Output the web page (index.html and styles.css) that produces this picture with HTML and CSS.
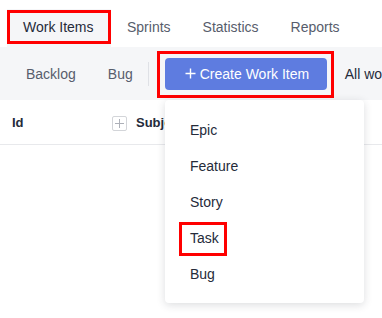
FILE: index.html
```html
<!DOCTYPE html>
<html>
<head>
<meta charset="utf-8">
<link rel="stylesheet" href="styles.css">
</head>
<body>
<div class="tabs">
  <div class="tab active"><span>Work Items</span></div>
  <div class="tab">Sprints</div>
  <div class="tab">Statistics</div>
  <div class="tab">Reports</div>
</div>
<div class="toolbar">
  <div class="tool">Backlog</div>
  <div class="tool">Bug</div>
  <div class="sep"></div>
  <button class="create">
    <svg class="plus" width="11" height="11" viewBox="0 0 11 11"><path d="M5.5 0.5v10M0.5 5.5h10" stroke="#fff" stroke-width="1.4" fill="none"/></svg>
    <span>Create Work Item</span>
  </button>
  <div class="allwork">All wo</div>
  <div class="menu">
    <div class="item">Epic</div>
    <div class="item">Feature</div>
    <div class="item">Story</div>
    <div class="item"><span class="mark">Task</span></div>
    <div class="item">Bug</div>
  </div>
</div>
<div class="thead">
  <div class="col-id">Id</div>
  <div class="addbox"><svg width="9" height="9" viewBox="0 0 9 9"><path d="M4.5 0v9M0 4.5h9" stroke="#adb0b8" stroke-width="1" fill="none"/></svg></div>
  <div class="col-subj">Subject</div>
</div>
</body>
</html>
```

FILE: styles.css
```css
html, body {
  margin: 0;
  padding: 0;
  background: #fff;
  font-family: "Liberation Sans", Arial, sans-serif;
  font-size: 14px;
  color: #252b3a;
  overflow: hidden;
  width: 382px;
  height: 318px;
}
.tabs {
  display: flex;
  height: 47px;
  padding-left: 7px;
  align-items: flex-end;
  background: #fff;
}
.tab {
  flex-shrink: 0;
  height: 38px;
  line-height: 37px;
  padding: 0 16px;
  color: #575d6c;
  white-space: nowrap;
}
.tab.active {
  background: #f5f6f8;
  color: #252b3a;
  position: relative;
  width: 72px;
}
.tab.active::after {
  content: "";
  position: absolute;
  left: 0;
  top: 1px;
  width: 98px;
  height: 28px;
  border: 3px solid #f00;
}
.toolbar {
  position: relative;
  display: flex;
  align-items: center;
  height: 53px;
  background: #f5f6f8;
  padding-left: 10px;
  white-space: nowrap;
}
.tool {
  flex-shrink: 0;
  padding: 0 16px;
  color: #575d6c;
}
.sep {
  flex-shrink: 0;
  width: 1px;
  height: 24px;
  background: #dfe1e6;
  margin-left: -1px;
}
.create {
  flex-shrink: 0;
  position: relative;
  margin-left: 16px;
  width: 162px;
  height: 32px;
  border: none;
  border-radius: 4px;
  background: #5e7ce0;
  color: #fff;
  font-family: inherit;
  font-size: 14px;
  display: flex;
  align-items: center;
  padding: 0 0 0 20px;
  gap: 4px;
  white-space: nowrap;
}
.create::after {
  content: "";
  position: absolute;
  left: -8px;
  top: -7px;
  right: -7px;
  bottom: -8px;
  border: 3px solid #f00;
}
.plus {
  display: block;
  flex-shrink: 0;
}
.allwork {
  flex-shrink: 0;
  margin-left: 18px;
  color: #252b3a;
}
.menu {
  position: absolute;
  left: 165px;
  top: 53px;
  width: 199px;
  padding: 12px 0 11px;
  background: #fff;
  border-radius: 4px;
  box-shadow: 0 2px 8px rgba(37, 43, 58, 0.16);
  z-index: 5;
}
.item {
  height: 36px;
  line-height: 36px;
  padding-left: 25px;
  color: #252b3a;
}
.mark {
  position: relative;
  display: inline-block;
}
.mark::after {
  content: "";
  position: absolute;
  left: -11px;
  right: -8px;
  top: 2px;
  bottom: 0;
  border: 3px solid #f00;
}
.thead {
  display: flex;
  align-items: center;
  height: 44px;
  border-bottom: 1px solid #e8e9ec;
  padding-left: 12px;
  font-size: 13px;
  font-weight: bold;
  color: #252b3a;
  white-space: nowrap;
}
.col-id {
  width: 100px;
  flex-shrink: 0;
}
.addbox {
  flex-shrink: 0;
  width: 13px;
  height: 13px;
  border: 1px solid #d3d5d9;
  border-radius: 2px;
  display: flex;
  align-items: center;
  justify-content: center;
  margin-top: 2px;
}
.col-subj {
  margin-left: 9px;
}
```
